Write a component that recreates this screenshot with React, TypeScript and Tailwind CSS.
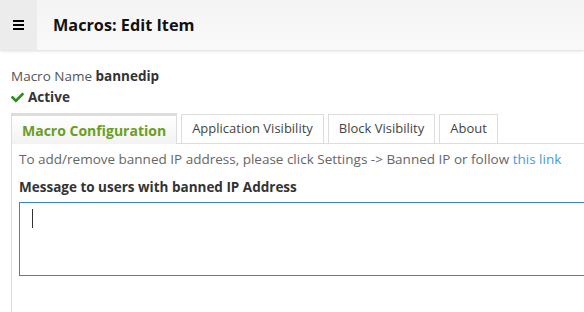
const tabs = ["Macro Configuration", "Application Visibility", "Block Visibility", "About"];

function CheckIcon() {
  return (
    <svg viewBox="0 0 512 512" className="w-[13px] h-[13px] fill-[#2e8b22]">
      <path d="M173.9 439.4l-166.4-166.4c-10-10-10-26.2 0-36.2l36.2-36.2c10-10 26.2-10 36.2 0L192 312.7 432.1 72.6c10-10 26.2-10 36.2 0l36.2 36.2c10 10 10 26.2 0 36.2l-294.4 294.4c-10 10-26.2 10-36.2 0z" />
    </svg>
  );
}

export default function App() {
  return (
    <div className="w-[584px] h-[312px] overflow-hidden bg-white font-['Open_Sans',sans-serif] text-[13.5px]">
      {/* Header */}
      <div className="flex h-[50px] bg-gradient-to-b from-[#f4f4f4] to-[#f9f9f9] shadow-[0_1px_3px_rgba(0,0,0,0.15)]">
        <div className="w-[37px] flex items-center justify-center bg-[#ececec]">
          <div className="flex flex-col gap-[2px] w-[11px]">
            <span className="h-[2px] bg-black" />
            <span className="h-[2px] bg-black" />
            <span className="h-[2px] bg-black" />
          </div>
        </div>
        <h1 className="ml-[16px] self-center text-[16.25px] font-bold text-[#111]">Macros: Edit Item</h1>
      </div>

      <div className="pl-[11px] pt-[16px]">
        <div className="text-[#555] leading-[21px]">
          Macro Name <span className="font-bold text-[#333]">bannedip</span>
        </div>
        <div className="flex items-center gap-[4px] leading-[21px] font-bold text-[#333]">
          <CheckIcon />
          Active
        </div>

        {/* Tabs */}
        <div className="mt-[5px] flex items-end gap-[4px] border-b border-[#ddd]">
          {tabs.map((t, i) =>
            i === 0 ? (
              <div
                key={t}
                className="h-[31px] px-[10px] -mb-px flex items-center border-t-[3px] border-x border-[#ddd] border-t-[#dcdcdc] bg-gradient-to-b from-white to-[#f3f3f3] text-[14px] font-bold text-[#6a9e1f]"
              >
                {t}
              </div>
            ) : (
              <div
                key={t}
                className="h-[29px] px-[10px] flex items-center border border-b-0 border-[#ddd] bg-white text-[13px] text-[#444]"
              >
                {t}
              </div>
            )
          )}
        </div>

        {/* Panel */}
        <div className="border-l border-[#ddd] pl-[7px] pt-[4px] h-[180px]">
          <p className="text-[#666] leading-[22px]">
            To add/remove banned IP address, please click Settings -&gt; Banned IP or follow{" "}
            <a className="text-[#4a9bd0]">this link</a>
          </p>
          <label className="block mt-[8px] font-bold text-[#333] leading-[18px]">
            Message to users with banned IP Address
          </label>
          <div className="mt-[6px] h-[74px] w-[600px] border border-[#3a86c0] px-[12px] pt-[6px]">
            <span className="block w-px h-[19px] bg-[#333]" />
          </div>
        </div>
      </div>
    </div>
  );
}
